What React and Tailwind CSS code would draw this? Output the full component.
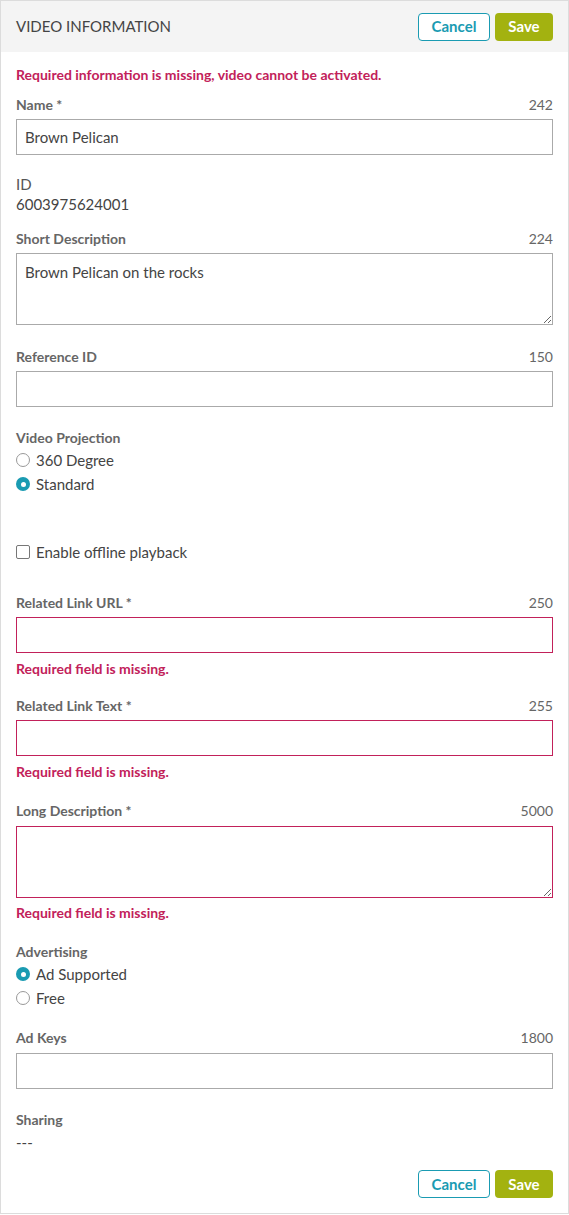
import React from "react";

const font = { fontFamily: "Lato, 'Noto Sans', sans-serif" };

function Label({ text, count, className = "" }) {
  return (
    <div className={`flex justify-between items-center h-[20px] text-[14px] leading-[20px] ${className}`}>
      <span className="font-bold text-[#666]">{text}</span>
      {count && <span className="text-[#666]">{count}</span>}
    </div>
  );
}

function Input({ value = "", error = false, className = "mt-[4px]" }) {
  return (
    <div
      className={`${className} h-[36px] border ${error ? "border-[#c2215a]" : "border-[#aaaaaa]"} px-[8px] flex items-center text-[15px] text-[#444]`}
    >
      {value}
    </div>
  );
}

function Area({ value = "", error = false, className = "mt-[4px]" }) {
  return (
    <textarea
      readOnly
      value={value}
      className={`block ${className} w-full h-[72px] border ${error ? "border-[#c2215a]" : "border-[#aaaaaa]"} px-[8px] pt-[8px] text-[15px] leading-[20px] text-[#444] outline-none resize-y`}
      style={font}
    />
  );
}

function ErrorText({ className = "mt-[6px]" }) {
  return (
    <div className={`${className} h-[20px] leading-[20px] text-[14px] font-bold text-[#c2215a]`}>
      Required field is missing.
    </div>
  );
}

function Radio({ checked, label }) {
  return (
    <div className="flex items-center h-[24px] text-[15px] text-[#444]">
      {checked ? (
        <span className="w-[14px] h-[14px] rounded-full bg-[#1a9bb2] flex items-center justify-center">
          <span className="w-[5px] h-[5px] rounded-full bg-white" />
        </span>
      ) : (
        <span className="w-[14px] h-[14px] rounded-full border border-[#999] bg-white" />
      )}
      <span className="ml-[6px]">{label}</span>
    </div>
  );
}

function Buttons() {
  return (
    <div className="flex gap-[5px]">
      <button className="w-[72px] h-[28px] rounded-[4px] border border-[#1a9bb2] bg-white text-[#1a9bb2] text-[15px] font-bold flex items-center justify-center">
        Cancel
      </button>
      <button className="w-[58px] h-[28px] rounded-[4px] bg-[#a3b210] text-white text-[15px] font-bold flex items-center justify-center">
        Save
      </button>
    </div>
  );
}

export default function App() {
  return (
    <div className="w-[569px] bg-white" style={font}>
      <div className="border border-[#dcdcdc]">
        <div className="h-[51px] bg-[#f4f4f4] flex items-center justify-between px-[15px]">
          <span className="text-[15px] text-[#444]">VIDEO INFORMATION</span>
          <Buttons />
        </div>
        <div className="px-[15px] pb-[15px]">
          <div className="mt-[13px] h-[20px] leading-[20px] text-[14px] font-bold text-[#c2215a]">
            Required information is missing, video cannot be activated.
          </div>

          <Label className="mt-[10px]" text="Name *" count="242" />
          <Input value="Brown Pelican" />

          <div className="mt-[19px] text-[15px] leading-[20px] text-[#555]">ID</div>
          <div className="text-[15px] leading-[20px] text-[#444]">6003975624001</div>

          <Label className="mt-[15px]" text="Short Description" count="224" />
          <Area value="Brown Pelican on the rocks" />

          <Label className="mt-[22px]" text="Reference ID" count="150" />
          <Input />

          <Label className="mt-[21px]" text="Video Projection" />
          <Radio checked={false} label="360 Degree" />
          <Radio checked label="Standard" />

          <div className="mt-[46px] flex items-center h-[20px] text-[15px] text-[#444]">
            <span className="w-[14px] h-[14px] rounded-[2px] border border-[#777] bg-white" />
            <span className="ml-[6px]">Enable offline playback</span>
          </div>

          <Label className="mt-[31px]" text="Related Link URL *" count="250" />
          <Input error />
          <ErrorText />

          <Label className="mt-[17px]" text="Related Link Text *" count="255" />
          <Input error />
          <ErrorText />

          <Label className="mt-[19px]" text="Long Description *" count="5000" />
          <Area error className="mt-[5px]" />
          <ErrorText className="mt-[5px]" />

          <Label className="mt-[19px]" text="Advertising" />
          <Radio checked label="Ad Supported" />
          <Radio checked={false} label="Free" />

          <Label className="mt-[18px]" text="Ad Keys" count="1800" />
          <Input className="mt-[5px]" />

          <Label className="mt-[21px]" text="Sharing" />
          <div className="mt-[2px] h-[20px] leading-[20px] text-[15px] text-[#444]">---</div>

          <div className="mt-[18px] flex justify-end">
            <Buttons />
          </div>
        </div>
      </div>
    </div>
  );
}
